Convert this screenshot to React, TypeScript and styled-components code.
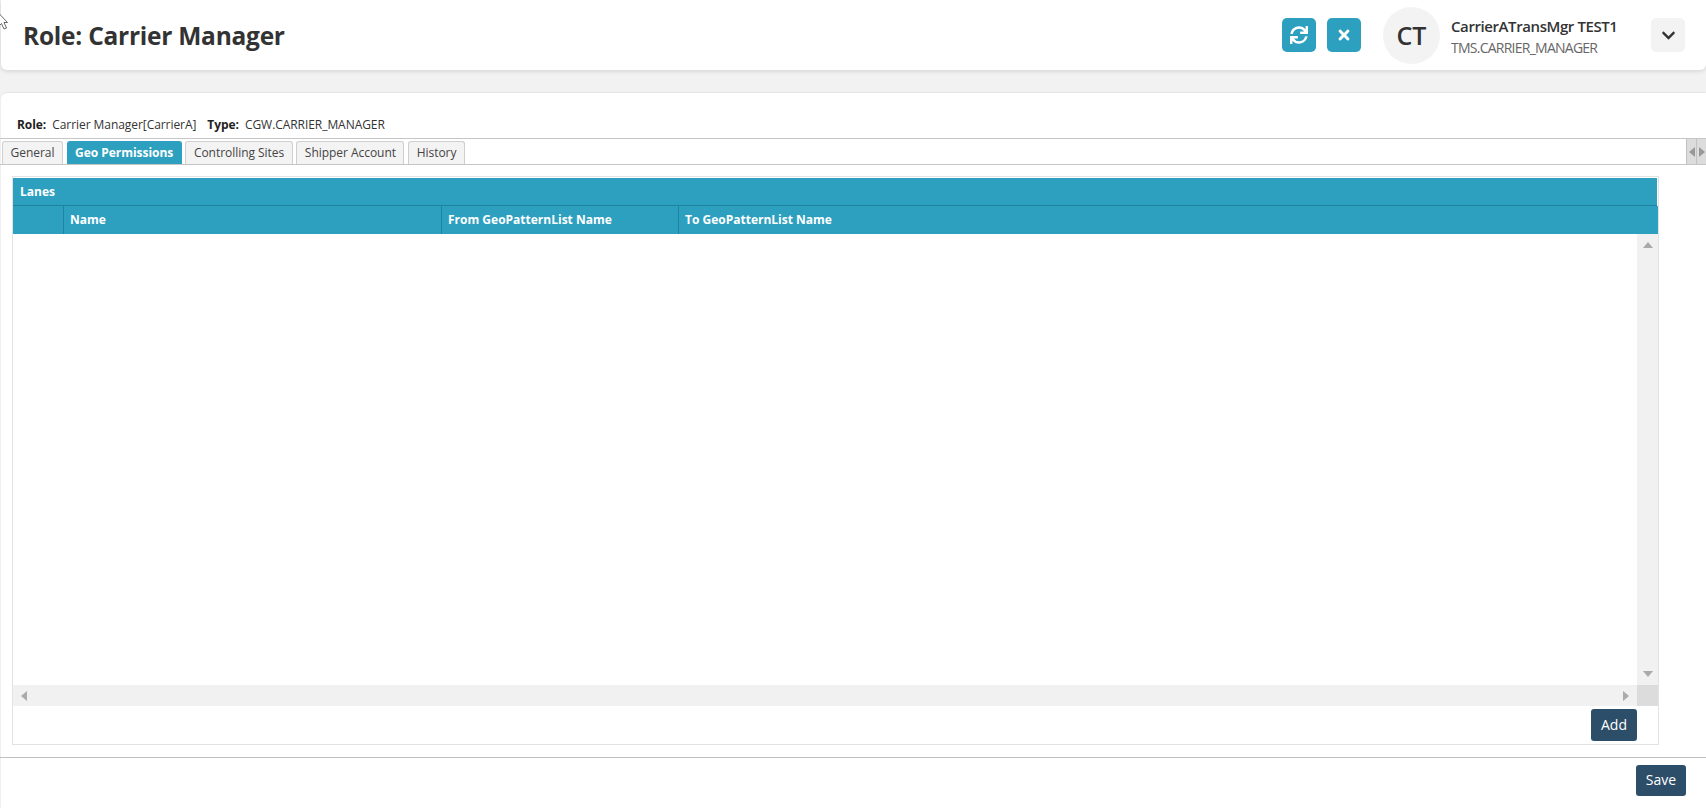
import React from "react";
import styled, { createGlobalStyle } from "styled-components";
import { FaSync, FaTimes, FaChevronDown } from "react-icons/fa";

const Global = createGlobalStyle`
  html, body { margin: 0; padding: 0; background: #f2f2f2; }
  body { font-family: "Open Sans", "Liberation Sans", sans-serif; color: #333; overflow: hidden; }
  * { box-sizing: border-box; }
`;

const Page = styled.div`
  width: 1706px;
  height: 808px;
  display: flex;
  flex-direction: column;
  position: relative;
  overflow: hidden;
`;

const Header = styled.header`
  height: 70px;
  margin-left: 1px;
  background: #fff;
  border-radius: 0 0 6px 6px;
  box-shadow: 0 1px 5px rgba(0, 0, 0, 0.14);
  display: flex;
  align-items: center;
  padding: 0 21px 0 22px;
`;

const Title = styled.h1`
  margin: 0;
  padding-top: 2px;
  flex: 1;
  font-size: 24.5px;
  font-weight: 700;
  line-height: 34px;
  color: #333;
  letter-spacing: -0.25px;
`;

const IconButton = styled.button`
  width: 34px;
  height: 34px;
  border: 0;
  border-radius: 5px;
  padding: 0;
  margin-right: 11px;
  background: #2da0bf;
  color: #fff;
  display: flex;
  align-items: center;
  justify-content: center;
`;

const Avatar = styled.div`
  width: 57px;
  height: 57px;
  margin-left: 11px;
  border-radius: 50%;
  background: #f3f3f3;
  color: #333;
  font-size: 25px;
  font-weight: 600;
  display: flex;
  align-items: center;
  justify-content: center;
`;

const UserInfo = styled.div`
  width: 200px;
  margin-left: 11px;
  padding-top: 4px;
  display: flex;
  flex-direction: column;
`;

const UserName = styled.div`
  font-size: 15px;
  font-weight: 600;
  line-height: 21px;
  letter-spacing: -0.41px;
  color: #333;
`;

const UserRole = styled.div`
  font-size: 14px;
  line-height: 21px;
  letter-spacing: -0.75px;
  color: #666;
`;

const MenuButton = styled.button`
  width: 34px;
  height: 34px;
  border: 0;
  border-radius: 5px;
  padding: 0;
  background: #f3f3f3;
  color: #333;
  display: flex;
  align-items: center;
  justify-content: center;
`;

const Card = styled.main`
  margin-top: 23px;
  margin-left: 1px;
  flex: 1;
  background: #fff;
  border-radius: 6px 0 0 0;
  display: flex;
  flex-direction: column;
  box-shadow: 0 -1px 2px rgba(0, 0, 0, 0.06);
`;

const Summary = styled.div`
  height: 45px;
  padding: 23px 0 0 16px;
  display: flex;
  font-size: 12px;
  line-height: 18px;
  letter-spacing: -0.06px;
  color: #333;
`;

const SummaryLabel = styled.span`
  font-weight: 700;
  margin-right: 6px;
  color: #222;
`;

const SummaryValue = styled.span`
  margin-right: 11px;
`;

const TabBar = styled.div`
  height: 27px;
  margin-left: -1px;
  border-top: 1px solid #c6c6c6;
  border-bottom: 1px solid #c6c6c6;
  display: flex;
  align-items: flex-end;
  padding-left: 2px;
  gap: 3.7px;
  position: relative;
`;

const Tab = styled.div<{ $active?: boolean }>`
  height: 23px;
  padding: 0 7.5px;
  border: 1px solid ${(p) => (p.$active ? "#2da0bf" : "#cfcfcf")};
  border-bottom: 0;
  border-radius: 3px 3px 0 0;
  background: ${(p) => (p.$active ? "#2da0bf" : "#f3f3f3")};
  color: ${(p) => (p.$active ? "#fff" : "#444")};
  font-size: 12px;
  font-weight: ${(p) => (p.$active ? 700 : 400)};
  letter-spacing: -0.04px;
  line-height: 21px;
`;

const TabScroll = styled.div`
  position: absolute;
  right: 0;
  top: 0;
  height: 25px;
  display: flex;
`;

const TabArrow = styled.div`
  width: 10px;
  background: #dcdcdc;
  border-left: 1px solid #c2c2c2;
  display: flex;
  align-items: center;
  justify-content: center;
`;

const Body = styled.div`
  flex: 1;
  padding: 11px 0 0 11px;
`;

const Grid = styled.section`
  width: 1647px;
  height: 569px;
  border: 1px solid #e2e2e2;
  padding-top: 1px;
  display: flex;
  flex-direction: column;
`;

const GridTitle = styled.div`
  height: 28px;
  background: #2da0bf;
  margin-right: 1px;
  border-bottom: 1px solid #1f84a0;
  color: #fff;
  font-size: 12px;
  font-weight: 700;
  line-height: 27px;
  padding-left: 7px;
`;

const ColumnRow = styled.div`
  height: 28px;
  background: #2da0bf;
  display: flex;
  color: #fff;
  font-size: 12px;
  font-weight: 700;
  line-height: 27px;
`;

const Column = styled.div<{ $w?: number }>`
  width: ${(p) => (p.$w ? `${p.$w}px` : "auto")};
  flex: ${(p) => (p.$w ? "none" : 1)};
  padding-left: 6px;
  border-right: ${(p) => (p.$w ? "1px solid #1f84a0" : "0")};
`;

const Scroller = styled.div`
  height: 472px;
  display: grid;
  grid-template-columns: 1fr 21px;
  grid-template-rows: 1fr 21px;
`;

const EmptyArea = styled.div`
  background: #fff;
`;

const VScroll = styled.div`
  background: #f1f1f1;
  display: flex;
  flex-direction: column;
  justify-content: space-between;
  align-items: center;
  padding: 8px 0 8px;
`;

const HScroll = styled.div`
  background: #f1f1f1;
  display: flex;
  justify-content: space-between;
  align-items: center;
  padding: 0 8px;
`;

const Corner = styled.div`
  background: #dcdcdc;
`;

const GridFooter = styled.div`
  flex: 1;
  display: flex;
  justify-content: flex-end;
  align-items: flex-start;
  padding: 3px 21px 0 0;
`;

const PrimaryButton = styled.button<{ $w: number; $h: number }>`
  width: ${(p) => p.$w}px;
  height: ${(p) => p.$h}px;
  border: 0;
  border-radius: 3px;
  padding: 0 0 2px;
  background: #2c4e69;
  color: #fff;
  font-family: inherit;
  font-size: 14px;
`;

const Footer = styled.footer`
  margin-top: 11px;
  margin-left: -1px;
  height: 51px;
  border-top: 1px solid #c0c0c0;
  display: flex;
  justify-content: flex-end;
  padding: 7px 20px 0 0;
`;

const Cursor = styled.svg`
  position: absolute;
  left: -2px;
  top: 13px;
`;

const Arrow = ({ dir, color = "#aaa" }: { dir: "up" | "down" | "left" | "right"; color?: string }) => {
  const pts = {
    up: "0,6 5,0 10,6",
    down: "0,0 10,0 5,6",
    left: "6,0 6,10 0,5",
    right: "0,0 6,5 0,10",
  }[dir];
  const vertical = dir === "up" || dir === "down";
  return (
    <svg width={vertical ? 10 : 6} height={vertical ? 6 : 10} viewBox={vertical ? "0 0 10 6" : "0 0 6 10"}>
      <polygon points={pts} fill={color} />
    </svg>
  );
};

export default function App() {
  return (
    <Page>
      <Global />
      <Header>
        <Title>Role: Carrier Manager</Title>
        <IconButton aria-label="Refresh"><FaSync size={18} /></IconButton>
        <IconButton aria-label="Close"><FaTimes size={16} /></IconButton>
        <Avatar>CT</Avatar>
        <UserInfo>
          <UserName>CarrierATransMgr TEST1</UserName>
          <UserRole>TMS.CARRIER_MANAGER</UserRole>
        </UserInfo>
        <MenuButton aria-label="Menu"><FaChevronDown size={15} /></MenuButton>
      </Header>
      <Card>
        <Summary>
          <SummaryLabel>Role:</SummaryLabel>
          <SummaryValue>Carrier Manager[CarrierA]</SummaryValue>
          <SummaryLabel>Type:</SummaryLabel>
          <SummaryValue>CGW.CARRIER_MANAGER</SummaryValue>
        </Summary>
        <TabBar>
          <Tab>General</Tab>
          <Tab $active>Geo Permissions</Tab>
          <Tab>Controlling Sites</Tab>
          <Tab>Shipper Account</Tab>
          <Tab>History</Tab>
          <TabScroll>
            <TabArrow><Arrow dir="left" color="#999" /></TabArrow>
            <TabArrow><Arrow dir="right" color="#999" /></TabArrow>
          </TabScroll>
        </TabBar>
        <Body>
          <Grid>
            <GridTitle>Lanes</GridTitle>
            <ColumnRow>
              <Column $w={51} />
              <Column $w={378}>Name</Column>
              <Column $w={237}>From GeoPatternList Name</Column>
              <Column>To GeoPatternList Name</Column>
            </ColumnRow>
            <Scroller>
              <EmptyArea />
              <VScroll>
                <Arrow dir="up" />
                <Arrow dir="down" />
              </VScroll>
              <HScroll>
                <Arrow dir="left" />
                <Arrow dir="right" />
              </HScroll>
              <Corner />
            </Scroller>
            <GridFooter>
              <PrimaryButton $w={46} $h={32}>Add</PrimaryButton>
            </GridFooter>
          </Grid>
        </Body>
        <Footer>
          <PrimaryButton $w={50} $h={31}>Save</PrimaryButton>
        </Footer>
      </Card>
      <Cursor width="11" height="17" viewBox="0 0 11 17">
        <path d="M1 0.5 L9.5 9.5 L6 9.5 L8.5 15 L6 16 L3.5 10.5 L1 13 Z" fill="#fff" stroke="#444" strokeWidth="0.8" />
      </Cursor>
    </Page>
  );
}
